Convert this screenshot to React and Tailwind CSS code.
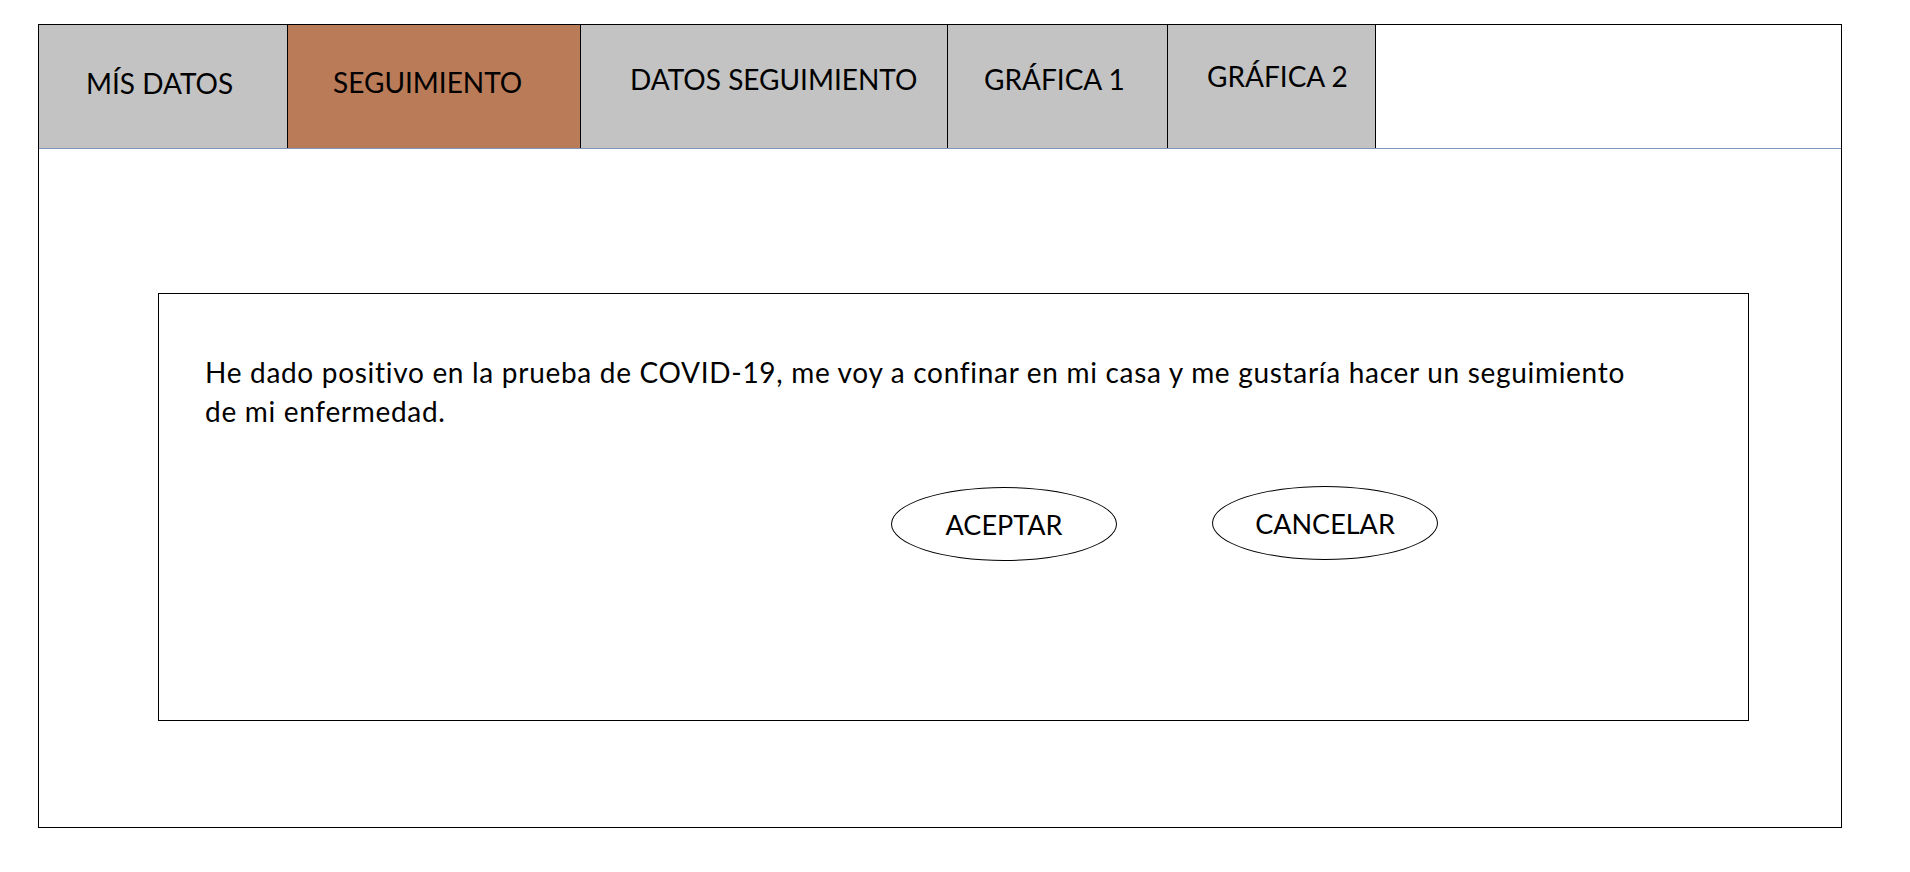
import React from "react";

const tabs = [
  { label: "MÍS DATOS", w: "w-[249px]", pad: "pl-[47px] pt-[41px]", bg: "bg-[#c3c3c3]" },
  { label: "SEGUIMIENTO", w: "w-[293px]", pad: "pl-[45px] pt-[40px]", bg: "bg-[#b97b58]" },
  { label: "DATOS SEGUIMIENTO", w: "w-[367px]", pad: "pl-[49px] pt-[37px]", bg: "bg-[#c3c3c3]" },
  { label: "GRÁFICA 1", w: "w-[220px]", pad: "pl-[36px] pt-[37px]", bg: "bg-[#c3c3c3]" },
  { label: "GRÁFICA 2", w: "w-[208px]", pad: "pl-[39px] pt-[34px]", bg: "bg-[#c3c3c3]" },
];

export default function App() {
  return (
    <div
      className="w-[1910px] h-[872px] bg-white pt-[24px] pl-[38px] text-black"
      style={{ fontFamily: "Lato, 'Open Sans', sans-serif" }}
    >
      <div className="w-[1804px] h-[804px] border border-black flex flex-col">
        <div className="flex h-[124px] border-b border-[#7e96bd]">
          {tabs.map((t) => (
            <div
              key={t.label}
              className={`${t.w} h-[123px] ${t.bg} ${t.pad} border-r border-black`}
            >
              <span className="block text-[28px] leading-[34px] whitespace-nowrap">
                {t.label}
              </span>
            </div>
          ))}
        </div>
        <div className="pl-[119px] pt-[144px]">
          <div className="w-[1591px] h-[428px] border border-black pl-[46px] pt-[59px]">
            <p className="text-[28px] leading-[39px] tracking-[0.7px] whitespace-nowrap">
              He dado positivo en la prueba de COVID-19, me voy a confinar en mi casa y me gustaría hacer un seguimiento
              <br />
              de mi enfermedad.
            </p>
            <div className="flex items-start pl-[686px] mt-[55px] gap-[95px]">
              <button className="w-[226px] h-[74px] mt-[1px] rounded-[50%] border border-black flex items-center justify-center text-[27px] leading-none bg-white">
                ACEPTAR
              </button>
              <button className="w-[226px] h-[74px] rounded-[50%] border border-black flex items-center justify-center text-[27px] leading-none bg-white">
                CANCELAR
              </button>
            </div>
          </div>
        </div>
      </div>
    </div>
  );
}
